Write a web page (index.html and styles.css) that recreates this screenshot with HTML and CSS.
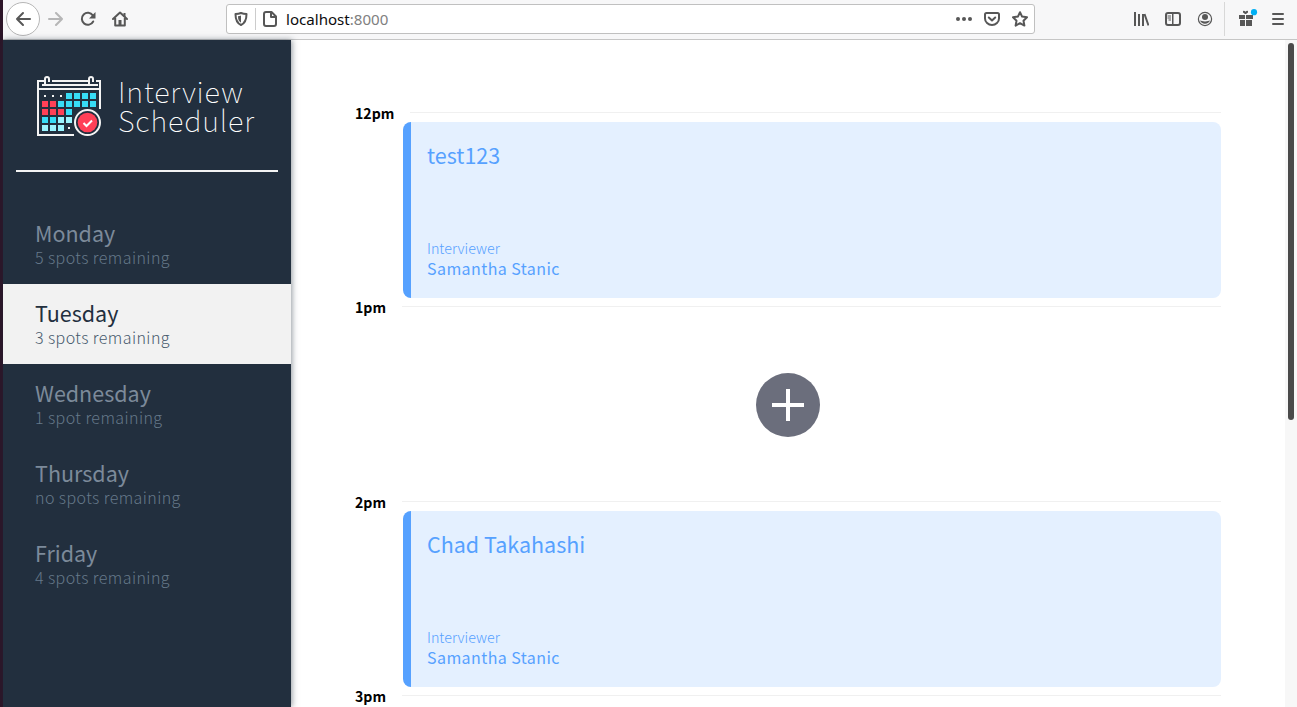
FILE: index.html
```html
<!DOCTYPE html>
<html lang="en">
<head>
<meta charset="utf-8">
<title>Interview Scheduler</title>
<link rel="stylesheet" href="styles.css">
</head>
<body>
<div class="window">
  <header class="toolbar">
    <button class="back" aria-label="Back"><svg width="16" height="16" viewBox="0 0 16 16"><path class="st" d="M15 8H2M8 2L2 8l6 6"/></svg></button>
    <svg class="nav-forward" width="16" height="16" viewBox="0 0 16 16"><path class="st" d="M1 8h13M8 2l6 6-6 6"/></svg>
    <svg class="nav-reload" width="16" height="16" viewBox="0 0 16 16"><path class="st" d="M13.2 10.5A6 6 0 1 1 12.8 4.4L14 5.600"/><path d="M15.500 1v6.500H9z"/></svg>
    <svg class="nav-home" width="16" height="16" viewBox="0 0 16 16"><path class="st" d="M1 8l7-6.500L15 8M3.200 7v7.500h9.600V7"/><path d="M6.500 9h3v6h-3z"/><path d="M11.500 2h2v4h-2z"/></svg>
    <div class="urlbar">
      <svg class="shield" width="14" height="14" viewBox="0 0 14 14"><path class="st" d="M7 1C5 1.800 3 2 1.500 2c0 5.500 1 9 5.500 11 4.500-2 5.500-5.500 5.500-11C11 2 9 1.800 7 1z"/><path d="M7 3.500v7.300C4.800 9.300 4 7.500 4 4.300 5 4.200 6 4 7 3.500z"/></svg>
      <i class="url-sep"></i>
      <svg class="page" width="14" height="16" viewBox="0 0 14 16"><path class="st" d="M3 1h5.500L13 5.500V13a2 2 0 0 1-2 2H3a2 2 0 0 1-2-2V3a2 2 0 0 1 2-2zM8 1v5h5"/></svg>
      <span class="url">localhost<span class="port">:8000</span></span>
      <svg class="dots" width="16" height="16" viewBox="0 0 16 16"><circle cx="2" cy="8" r="2"/><circle cx="8" cy="8" r="2"/><circle cx="14" cy="8" r="2"/></svg>
      <svg class="pocket" width="16" height="16" viewBox="0 0 16 16"><path class="st" d="M2.500 2h11A1.500 1.500 0 0 1 15 3.500V7.500a7 6.500 0 0 1-14 0V3.500A1.500 1.500 0 0 1 2.500 2zM4.800 6.500L8 9.500l3.200-3"/></svg>
      <svg class="star" width="16" height="16" viewBox="0 0 16 16"><path class="st" d="M8 1.200l2.100 4.400 4.900.700-3.500 3.400.9 4.900L8 12.200l-4.400 2.400.9-4.900L1 6.300l4.900-.7z"/></svg>
    </div>
    <svg class="library" width="16" height="16" viewBox="0 0 16 16"><path class="bar" d="M2 1v14M6 3v12M10 3v12M11.500 3l4 11.500"/></svg>
    <svg class="sidebar-icon" width="16" height="16" viewBox="0 0 16 16"><rect class="st" x="1" y="2" width="14" height="12" rx="2"/><path d="M7 2h1.500v12H7zM2.500 4.500H6v1H2.500zM2.500 6.500H6v1H2.500zM3.500 8.500H6v1H3.500z"/></svg>
    <svg class="account" width="16" height="16" viewBox="0 0 16 16"><circle class="thin" cx="8" cy="8" r="6.600"/><circle cx="8" cy="6" r="3"/><path d="M3 9.500c1.500 0 2.200 1 5 1s3.500-1 5-1c-.7 2-2.500 3.200-5 3.200S3.700 11.500 3 9.500z"/></svg>
    <i class="tool-sep"></i>
    <svg class="gift" width="20" height="20" viewBox="0 0 20 20"><path d="M1 6h6v4H1zM8 6h7v4H8zM2 11h5v6H2zM8 11h6v6H8zM5 2q1.500-.5 2.500.8Q8.500 1.500 10 2v1.500L8 5H7L5 3.500z"/><circle cx="16" cy="3.200" r="3.100" fill="#00b0f4"/></svg>
    <svg class="menu" width="12" height="16" viewBox="0 0 12 16"><path class="st" d="M1 3h10M1 8h10M1 13h10"/></svg>
  </header>

  <div class="content">
    <aside class="sidebar">
      <div class="brand">
        <svg width="67" height="63" viewBox="36 75 67 63">
          <g fill="none" stroke="#f4f4f4" stroke-width="2">
            <path d="M45 81h-7v54h36M52 81h37M96 81h4v28M38 89h62M42 85h56"/>
            <path d="M45 84v-5a2 2 0 0 1 4 0v3M89 84v-5a2 2 0 0 1 4 0v3"/>
          </g>
          <path fill="#f4f4f4" d="M44 95h2v2h-2zM52 95h2v2h-2zM60 95h2v2h-2zM68 127h2v2h-2z"/>
          <path fill="#37dcf6" d="M66 93h6v6h-6zM74 93h6v6h-6zM82 93h6v6h-6zM90 93h6v6h-6zM58 101h6v6h-6zM66 101h6v6h-6zM74 101h6v6h-6zM82 101h6v6h-6zM90 101h6v6h-6zM66 109h6v6h-6zM42 117h6v6h-6zM50 117h6v6h-6z"/>
          <path fill="#ff4057" d="M42 101h6v6h-6zM50 101h6v6h-6zM42 109h6v6h-6zM50 109h6v6h-6zM58 109h6v6h-6z"/>
          <path fill="#9bf4ff" d="M58 117h6v6h-6zM66 117h6v6h-6zM42 125h6v6h-6zM50 125h6v6h-6zM58 125h6v6h-6z"/>
          <circle cx="87.500" cy="122.500" r="12.500" fill="#222f3e" stroke="#f4f4f4" stroke-width="2"/>
          <circle cx="87.500" cy="122.500" r="9.800" fill="#ff4057"/>
          <path d="M83.500 123l3 3 5.500-5.500" fill="none" stroke="#fff" stroke-width="2"/>
        </svg>
        <div class="brand-name">Interview<br>Scheduler</div>
      </div>
      <hr class="rule">
      <nav class="days">
        <div class="day"><h2>Monday</h2><p>5 spots remaining</p></div>
        <div class="day selected"><h2>Tuesday</h2><p>3 spots remaining</p></div>
        <div class="day"><h2>Wednesday</h2><p>1 spot remaining</p></div>
        <div class="day"><h2>Thursday</h2><p>no spots remaining</p></div>
        <div class="day"><h2>Friday</h2><p>4 spots remaining</p></div>
      </nav>
    </aside>
    <main class="schedule">
      <section class="slot">
        <div class="time first"><h4>12pm</h4><i></i></div>
        <article class="card"><h2>test123</h2><div><h4>Interviewer</h4><h3>Samantha Stanic</h3></div></article>
      </section>
      <section class="slot tall">
        <div class="time"><h4>1pm</h4><i></i></div>
        <div class="empty"><button class="add" aria-label="Add"><svg width="32" height="32" viewBox="0 0 32 32"><path d="M16 0v32M0 16h32"/></svg></button></div>
      </section>
      <section class="slot">
        <div class="time"><h4>2pm</h4><i></i></div>
        <article class="card"><h2>Chad Takahashi</h2><div><h4>Interviewer</h4><h3>Samantha Stanic</h3></div></article>
      </section>
      <section class="slot">
        <div class="time"><h4>3pm</h4><i></i></div>
      </section>
    </main>
    <div class="scrollbar"><div class="thumb"></div></div>
  </div>
</div>
</body>
</html>
```
FILE: styles.css
```css
* { box-sizing: border-box; margin: 0; padding: 0; }
body {
  width: 1297px; height: 707px; overflow: hidden; background: #fff;
  font-family: "Noto Sans CJK SC", "Noto Sans", sans-serif;
}
h2, h3, h4 { font-weight: 400; }
button { border: 0; }
svg { display: block; flex: none; }
.window { display: flex; flex-direction: column; height: 707px; border-left: 3px solid #2c1528; }

.toolbar {
  display: flex; align-items: center; flex: none; height: 40px; padding: 0 12px 2px 3px;
  background: #f7f7f8; border-bottom: 1px solid #c6c6c6;
}
.toolbar svg { fill: #575757; }
.toolbar .st { fill: none; stroke: #575757; stroke-width: 2; stroke-linejoin: round; stroke-linecap: round; }
.toolbar .bar { fill: none; stroke: #575757; stroke-width: 2; }
.toolbar .thin { fill: none; stroke: #575757; stroke-width: 1.2; }
.back {
  display: grid; place-items: center; width: 34px; height: 34px; flex: none;
  background: #fff; border: 1px solid #b6b6b6; border-radius: 50%;
}
.nav-forward { margin-left: 8px; opacity: .4; }
.nav-reload { margin-left: 16px; }
.nav-home { margin-left: 16px; }
.urlbar {
  display: flex; align-items: center; width: 809px; height: 30px; margin-left: 98px; padding: 0 6px 0 7px;
  background: #fff; border: 1px solid #c0c0c0; border-radius: 3px;
}
.url-sep { width: 1px; height: 22px; margin: 0 7px; background: #ccc; }
.url { flex: 1; margin-left: 9px; font: 15.1px/20px "Noto Sans", sans-serif; color: #0c0c0d; }
.port { color: #808080; }
.pocket { margin-left: 12px; }
.star { margin-left: 12px; }
.library { margin-left: 98px; }
.sidebar-icon, .account { margin-left: 16px; }
.tool-sep { width: 1px; height: 34px; margin-left: 11px; background: #d8d8d8; }
.gift { margin-left: 13px; }
.menu { margin-left: 14px; }

.content { display: flex; flex: 1; min-height: 0; }
.sidebar {
  position: relative; width: 288px; flex: none; background: #222f3e;
  box-shadow: 1px 0 6px rgba(34, 47, 62, .5);
}
.brand { display: flex; align-items: flex-start; padding: 35px 0 0 33px; height: 130px; }
.brand-name { margin: 1px 0 0 15px; font-size: 29px; font-weight: 100; line-height: 29px; letter-spacing: .85px; color: #fff; }
.rule { width: 262px; margin-left: 13px; border: 0; height: 2px; background: #f4f4f4; }
.days { margin-top: 32px; }
.day { height: 80px; padding: 15px 32px; color: #f2f2f2; }
.day h2 { font-size: 21.5px; line-height: 28px; color: #7c8a9a; }
.day p { font-size: 16px; font-weight: 300; line-height: 20px; letter-spacing: .42px; color: #66798a; }
.day.selected { background: #f2f2f2; }
.day.selected h2 { color: #222f3e; }
.day.selected p { color: #46596c; }

.schedule { flex: 1; padding: 64px 64px 0; overflow: hidden; }
.slot { height: 194px; }
.slot.tall { height: 195px; }
.time { display: flex; height: 18px; }
.time h4 { width: 48px; font-size: 14.1px; font-weight: 700; line-height: 18px; color: #000; }
.time i { flex: 1; height: 1px; margin: 8px 0 0 -1px; background: #f0f0f0; }
.time.first i { margin-left: 7px; }
.card {
  display: flex; flex-direction: column; justify-content: space-between; height: 176px; margin-left: 48px;
  padding: 19px 16px 20px; background: #e4f0ff; border-left: 8px solid #56a1ff; border-radius: 8px; color: #56a1ff;
}
.card h2 { font-size: 21.5px; line-height: 28px; }
.card h4 { font-size: 14.3px; font-weight: 300; line-height: 20px; }
.card h3 { font-size: 16px; line-height: 20px; letter-spacing: .42px; }
.empty { display: grid; place-items: center; height: 177px; margin-left: 48px; }
.add { display: grid; place-items: center; width: 64px; height: 64px; margin-right: 48px; border-radius: 50%; background: #6b6e7c; }
.add path { fill: none; stroke: #fff; stroke-width: 4; }
.scrollbar { width: 12px; padding: 3px 3px 0; background: #f7f7f7; }
.thumb { height: 377px; border-radius: 3px; background: #4a4a4a; }
```
